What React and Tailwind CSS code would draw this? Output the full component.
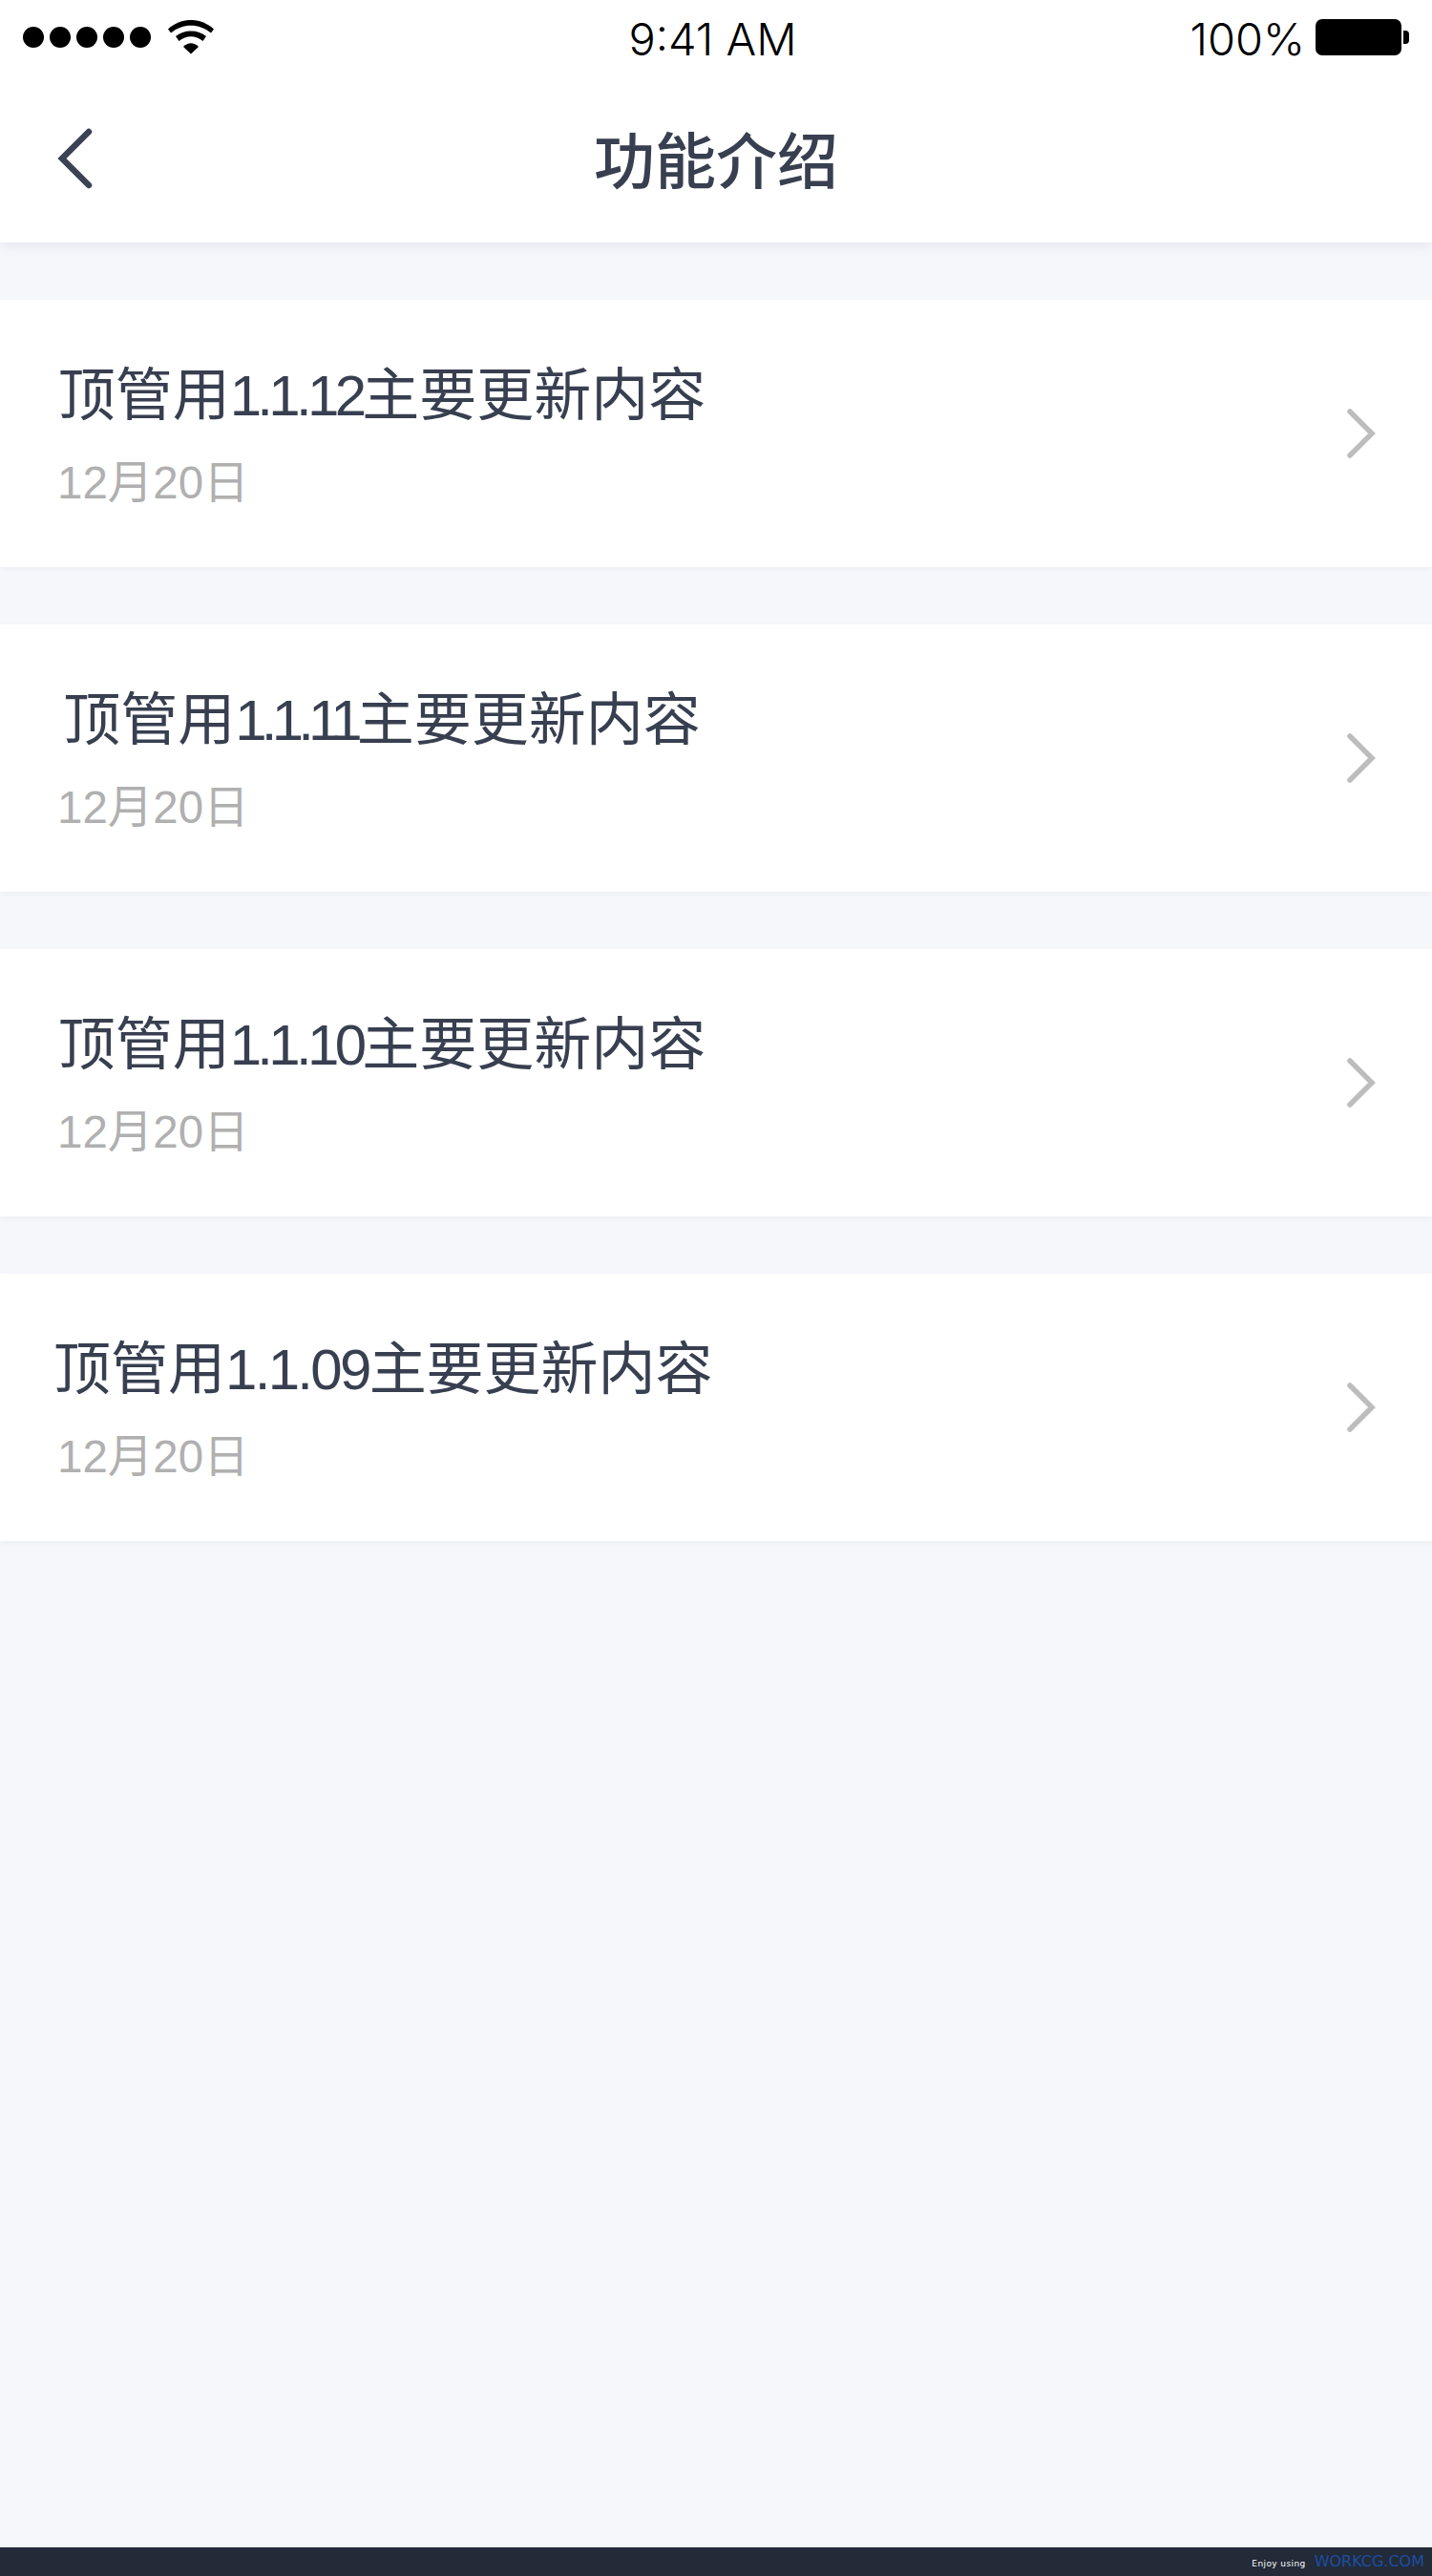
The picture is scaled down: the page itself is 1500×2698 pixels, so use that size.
import React from 'react';

// the reference font has narrow digits, so each version gets its own tracking
const releases = [
  { version: '1.1.12', tracking: 'tracking-[-4.7px]' },
  { version: '1.1.11', tracking: 'tracking-[-5.8px]' },
  { version: '1.1.10', tracking: 'tracking-[-4.7px]' },
  { version: '1.1.09', tracking: 'tracking-[-2.7px]' },
];

function SignalDots() {
  return (
    <div className="flex gap-[6px]">
      {[0, 1, 2, 3, 4].map((dot) => (
        <span key={dot} className="size-[22px] rounded-full bg-black" />
      ))}
    </div>
  );
}

function WifiIcon() {
  return (
    <svg width="48" height="36" viewBox="0 0 48 36" fill="black">
      <path d="M0 9.5C14 -3.2 34 -3.2 48 9.5L45 13.5C32 3.2 16 3.2 3 13.5Z" />
      <path d="M8 17C16 9.5 32 9.5 40 17L36.5 22C29 15.5 19 15.5 11.5 22Z" />
      <path d="M16 28C21 23 27 23 32 28L24 35.5Z" />
    </svg>
  );
}

function StatusBar() {
  return (
    <div className="grid h-[80px] grid-cols-3 items-center pb-[2px]">
      <div className="flex items-center gap-[18px] pl-[24px]">
        <SignalDots />
        <WifiIcon />
      </div>
      <div className="mt-[3px] pr-[7px] text-center font-['Inter',sans-serif] text-[47px] leading-none font-light text-black">
        9:41 AM
      </div>
      <div className="flex items-center justify-end pr-[24px]">
        <span className="mt-[3px] mr-[11px] font-['Inter',sans-serif] text-[47px] leading-none font-light text-black">
          100%
        </span>
        <span className="h-[38px] w-[90px] rounded-[7px] bg-black" />
        <span className="ml-[2px] h-[14px] w-[6px] rounded-r-[4px] bg-black" />
      </div>
    </div>
  );
}

function NavBar() {
  return (
    <div className="relative z-10 bg-white shadow-[0_3px_12px_rgba(60,70,100,0.10)]">
      <StatusBar />
      <div className="relative flex h-[174px] items-center justify-center pt-[5px]">
        <svg
          className="absolute top-[53px] left-[58px]"
          width="40"
          height="66"
          viewBox="0 0 40 66"
          fill="none"
          stroke="#3a4254"
          strokeWidth="6.5"
          strokeLinecap="round"
          strokeLinejoin="miter"
        >
          <path d="M35 5L7 33L35 61" />
        </svg>
        <h1 className="text-[64px] leading-none font-medium text-[#383f50]">功能介绍</h1>
      </div>
    </div>
  );
}

function ReleaseRow({ version, tracking }) {
  return (
    <div className="mt-[60px] flex h-[280px] items-center justify-between bg-white pr-[59px] pl-[60px] shadow-[0_2px_6px_rgba(60,70,100,0.05)]">
      <div className="w-[680px] pt-[3px]">
        <div className="-ml-[4px] w-[688px] text-center text-[60px] leading-[80px] whitespace-nowrap text-[#383f50]">
          顶管用<span className={tracking}>{version}</span>主要更新内容
        </div>
        <div className="mt-[21px] text-[47.5px] leading-[60px] text-[#b0b0b0]">12月20日</div>
      </div>
      <svg
        width="32"
        height="52"
        viewBox="0 0 32 52"
        fill="none"
        stroke="#bdbdbd"
        strokeWidth="5.5"
        strokeLinecap="round"
        strokeLinejoin="miter"
      >
        <path d="M5 3L28 26L5 49" />
      </svg>
    </div>
  );
}

export default function App() {
  return (
    <div className="flex min-h-[2698px] flex-col bg-[#f6f7fb] font-['Liberation_Sans','Noto_Sans_CJK_SC',sans-serif]">
      <NavBar />
      <div className="flex-1">
        {releases.map((release) => (
          <ReleaseRow key={release.version} version={release.version} tracking={release.tracking} />
        ))}
      </div>
      <div className="flex h-[30px] items-center justify-end gap-[9px] bg-[#232a38] pr-[8px] font-['DejaVu_Sans',sans-serif]">
        <span className="mt-[5px] text-[9px] leading-none tracking-[0.4px] text-white">Enjoy using</span>
        <span className="text-[16px] leading-none text-[#1c4fa0]">WORKCG.COM</span>
      </div>
    </div>
  );
}
